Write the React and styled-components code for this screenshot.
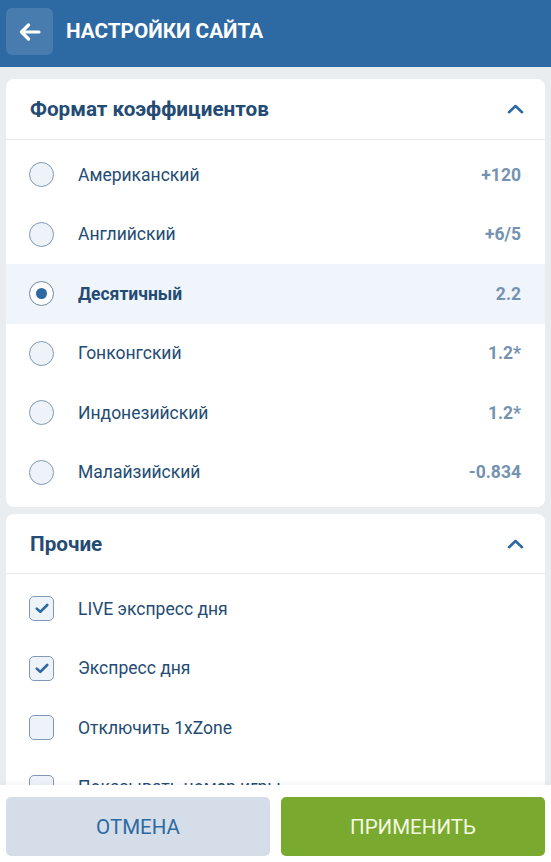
import React, { useState } from 'react';
import styled, { createGlobalStyle } from 'styled-components';

const COLOR = {
  PRIMARY: '#2d69a3',
  TEXT: '#244b73',
  MUTED: '#7592b0',
  PAGE: '#e9edf0',
  LINE: '#e6eaee',
  SELECTED: '#eff5fb',
  CONTROL_BG: '#eef3f9',
  CONTROL_BORDER: '#8199b3',
  GREEN: '#7aa92f',
  CANCEL: '#d5dee8',
};

const GlobalStyle = createGlobalStyle`
  * { box-sizing: border-box; }
  html, body { margin: 0; padding: 0; }
  body {
    font-family: Roboto, 'Noto Sans', 'Liberation Sans', sans-serif;
    background: ${COLOR.PAGE};
  }
`;

const Screen = styled.div`
  display: flex;
  flex-direction: column;
  height: 100vh;
  overflow: hidden;
`;

const Header = styled.header`
  display: flex;
  align-items: flex-start;
  height: 67px;
  padding: 8px 6px 0;
  background: ${COLOR.PRIMARY};
  flex-shrink: 0;
`;

const BackBtn = styled.button`
  width: 47px;
  height: 47px;
  border: 0;
  border-radius: 6px;
  background: rgba(255, 255, 255, 0.13);
  display: flex;
  align-items: center;
  justify-content: center;
  padding: 0;
  cursor: pointer;
`;

const Title = styled.h1`
  margin: 0 0 0 13px;
  line-height: 47px;
  font-size: 20.7px;
  font-weight: 700;
  color: #fff;
`;

const Content = styled.main`
  flex: 1;
  overflow: hidden;
  display: flex;
  flex-direction: column;
  gap: 7px;
  padding: 12px 6px 0;
`;

const Card = styled.section`
  background: #fff;
  border-radius: 8px;
  overflow: hidden;
  flex-shrink: 0;
`;

const CardHead = styled.div`
  display: flex;
  align-items: center;
  justify-content: space-between;
  height: ${(p) => p.$height || 61}px;
  padding: 0 21px 0 24px;
  border-bottom: 1px solid ${COLOR.LINE};
`;

const CardTitle = styled.h2`
  margin: 0;
  font-size: 20.7px;
  font-weight: 700;
  color: ${COLOR.TEXT};
`;

const List = styled.ul`
  list-style: none;
  margin: 0;
  padding: ${(p) => p.$pad || '5px 0 5px'};
`;

const Row = styled.li`
  display: flex;
  align-items: center;
  height: 59.5px;
  padding: 0 24px 0 23px;
  background: ${(p) => (p.$active ? COLOR.SELECTED : 'transparent')};
  cursor: pointer;
`;

const Radio = styled.span`
  width: 25px;
  height: 25px;
  border-radius: 50%;
  border: 1.5px solid ${(p) => (p.$checked ? '#6f869f' : COLOR.CONTROL_BORDER)};
  background: ${(p) => (p.$checked ? '#fff' : COLOR.CONTROL_BG)};
  display: flex;
  align-items: center;
  justify-content: center;
  flex-shrink: 0;

  &::after {
    content: '';
    display: ${(p) => (p.$checked ? 'block' : 'none')};
    width: 11px;
    height: 11px;
    border-radius: 50%;
    background: ${COLOR.PRIMARY};
  }
`;

const Box = styled.span`
  width: 25px;
  height: 25px;
  border-radius: 5px;
  border: 1.5px solid ${COLOR.CONTROL_BORDER};
  background: ${COLOR.CONTROL_BG};
  display: flex;
  align-items: center;
  justify-content: center;
  flex-shrink: 0;
`;

const Label = styled.span`
  flex: 1;
  margin-left: 24px;
  font-size: 17.5px;
  font-weight: ${(p) => (p.$bold ? 700 : 400)};
  color: ${COLOR.TEXT};
`;

const Value = styled.span`
  font-size: 17.5px;
  font-weight: 700;
  color: ${COLOR.MUTED};
`;

const Footer = styled.footer`
  flex-shrink: 0;
  display: grid;
  grid-template-columns: 1fr 1fr;
  gap: 11px;
  padding: 12px 6px 6px;
  background: #fff;
  box-shadow: 0 -2px 6px rgba(0, 0, 0, 0.04);
`;

const ActionBtn = styled.button`
  height: 59px;
  border: 0;
  border-radius: 5px;
  font-family: inherit;
  font-size: 20.5px;
  font-weight: 400;
  text-transform: uppercase;
  background: ${(p) => (p.$primary ? COLOR.GREEN : COLOR.CANCEL)};
  color: ${(p) => (p.$primary ? '#f4f9e2' : COLOR.PRIMARY)};
  cursor: pointer;
`;

const Arrow = () => (
  <svg width="22" height="18" viewBox="0 0 22 18" fill="none">
    <path d="M20 9H3M9.5 2L2.5 9l7 7" stroke="#fff" strokeWidth="3.2" strokeLinecap="round" strokeLinejoin="round" />
  </svg>
);

const Chevron = () => (
  <svg width="17" height="10" viewBox="0 0 17 10" fill="none">
    <path d="M2 8.2l6.5-6.2 6.5 6.2" stroke={COLOR.PRIMARY} strokeWidth="2.6" strokeLinecap="round" strokeLinejoin="round" />
  </svg>
);

const Check = () => (
  <svg width="14" height="11" viewBox="0 0 14 11" fill="none">
    <path d="M1.8 5.6l3.5 3.3L12.2 2" stroke={COLOR.PRIMARY} strokeWidth="2.6" strokeLinecap="round" strokeLinejoin="round" />
  </svg>
);

const formats = [
  { name: 'Американский', value: '+120' },
  { name: 'Английский', value: '+6/5' },
  { name: 'Десятичный', value: '2.2' },
  { name: 'Гонконгский', value: '1.2*' },
  { name: 'Индонезийский', value: '1.2*' },
  { name: 'Малайзийский', value: '-0.834' },
];

const initialOther = [
  { name: 'LIVE экспресс дня', on: true },
  { name: 'Экспресс дня', on: true },
  { name: 'Отключить 1xZone', on: false },
  { name: 'Показывать номер игры', on: false },
];

const App = () => {
  const [format, setFormat] = useState('Десятичный');
  const [other, setOther] = useState(initialOther);

  const toggle = (name) => {
    setOther((list) => list.map((item) => (item.name === name ? { ...item, on: !item.on } : item)));
  };

  return (
    <Screen>
      <GlobalStyle />
      <Header>
        <BackBtn aria-label="Назад">
          <Arrow />
        </BackBtn>
        <Title>НАСТРОЙКИ САЙТА</Title>
      </Header>
      <Content>
        <Card>
          <CardHead>
            <CardTitle>Формат коэффициентов</CardTitle>
            <Chevron />
          </CardHead>
          <List>
            {formats.map((f) => {
              const active = f.name === format;
              return (
                <Row key={f.name} $active={active} onClick={() => setFormat(f.name)}>
                  <Radio $checked={active} />
                  <Label $bold={active}>{f.name}</Label>
                  <Value>{f.value}</Value>
                </Row>
              );
            })}
          </List>
        </Card>
        <Card>
          <CardHead $height={60}>
            <CardTitle>Прочие</CardTitle>
            <Chevron />
          </CardHead>
          <List $pad="5px 0 0">
            {other.map((item) => (
              <Row key={item.name} onClick={() => toggle(item.name)}>
                <Box>{item.on && <Check />}</Box>
                <Label>{item.name}</Label>
              </Row>
            ))}
          </List>
        </Card>
      </Content>
      <Footer>
        <ActionBtn>Отмена</ActionBtn>
        <ActionBtn $primary>Применить</ActionBtn>
      </Footer>
    </Screen>
  );
};

export default App;
